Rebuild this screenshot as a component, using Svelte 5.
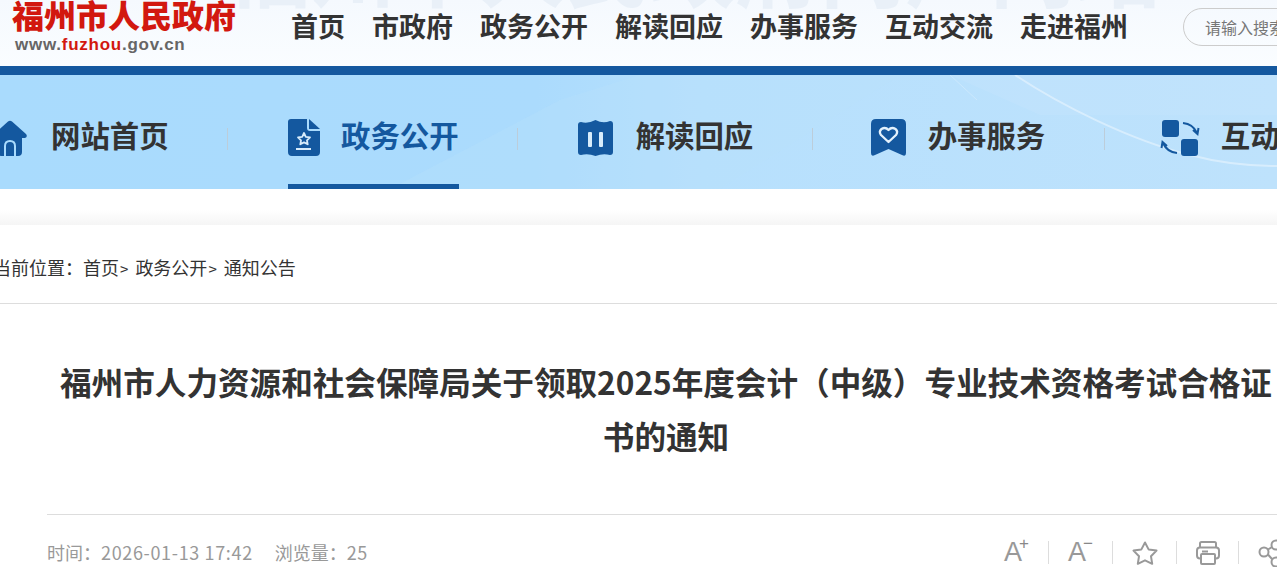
<script>
  const topLinks = ['首页', '市政府', '政务公开', '解读回应', '办事服务', '互动交流', '走进福州'];
  const channels = [
    { name: '网站首页', icon: 'home' },
    { name: '政务公开', icon: 'doc', active: true },
    { name: '解读回应', icon: 'map' },
    { name: '办事服务', icon: 'heart' },
    { name: '互动交流', icon: 'swap' }
  ];
  const crumbs = ['首页', '政务公开', '通知公告'];
</script>

<div class="page">
  <header class="top">
    <div class="watermark" aria-hidden="true">福州市人民政府门户网站</div>
    <div class="logo">
      <div class="logo-name">福州市人民政府</div>
      <div class="logo-url">www.<em>fuzhou</em>.gov.cn</div>
    </div>
    <nav class="top-links">
      {#each topLinks as link}
        <span>{link}</span>
      {/each}
    </nav>
    <div class="search">请输入搜索</div>
  </header>

  <nav class="channels">
    <svg class="channels-bg" viewBox="0 0 1277 114" preserveAspectRatio="none" aria-hidden="true">
      <defs>
        <linearGradient id="sky" x1="0" x2="1" y1="0" y2="0">
          <stop offset="0" stop-color="#a9dbfd" />
          <stop offset="0.42" stop-color="#abdbfd" />
          <stop offset="0.55" stop-color="#b7e0fd" />
          <stop offset="1" stop-color="#bee2fc" />
        </linearGradient>
      </defs>
      <rect width="1277" height="114" fill="url(#sky)" />
      <polygon points="390,114 560,25 640,0 900,0 720,114" fill="#bbe1fd" opacity="0.3" />
      <polygon points="950,0 1277,0 1277,40 1040,40" fill="#fff" opacity="0.06" />
      <path d="M950 0 L977 25" stroke="#fff" stroke-width="1" opacity="0.25" />
      <path d="M1015 0 C1060 30 1130 65 1190 80 C1220 88 1250 91 1277 91" fill="none" stroke="#fff" stroke-width="2" opacity="0.4" />
    </svg>
    {#each channels as item}
      <a class="channel" class:active={item.active}>
        <span class="channel-inner {item.icon}">
          {#if item.icon === 'home'}
            <svg width="34" height="36" viewBox="0 0 34 36">
              <path fill="#14589f" d="M15 1.5 Q17 0 19 1.5 L33 14 Q35 17 32 18 H29 V32 Q29 36 25 36 H9 Q5 36 5 32 V18 H2 Q-1 17 1 14 Z" />
              <path fill="none" stroke="#a9dbfd" stroke-width="2" d="M12 36 V26 Q12 21 17 21 Q22 21 22 26 V36" />
            </svg>
          {:else if item.icon === 'doc'}
            <svg width="32" height="37" viewBox="0 0 32 37">
              <path fill="#14589f" d="M3 0 H19 V9 Q19 12 22 12 H32 V33 Q32 37 28 37 H4 Q0 37 0 33 V3 Q0 0 3 0 Z" />
              <path fill="#14589f" d="M21 0 L32 10 H21 Z" />
              <path fill="none" stroke="#d8ecfb" stroke-width="1.8" stroke-linejoin="round" d="M16 14 L17.8 17.8 L22 18.4 L19 21.3 L19.7 25.3 L16 23.4 L12.3 25.3 L13 21.3 L10 18.4 L14.2 17.8 Z" />
              <rect x="8" y="29" width="15" height="2" fill="#d8ecfb" />
            </svg>
          {:else if item.icon === 'map'}
            <svg width="35" height="36" viewBox="0 0 35 36">
              <path fill="#14589f" d="M0 5 Q0 2 3 2 Q10 4 17.5 0 Q25 4 32 1 Q35 1 35 4 V32 Q35 35 32 35 Q25 33 17.5 36 Q10 33 3 35 Q0 35 0 32 Z" />
              <rect x="10" y="12" width="4" height="15" rx="1" fill="#d8ecfb" />
              <rect x="21" y="12" width="4" height="15" rx="1" fill="#d8ecfb" />
            </svg>
          {:else if item.icon === 'heart'}
            <svg width="35" height="37" viewBox="0 0 35 37">
              <path fill="#14589f" d="M5 0 H30 Q35 0 35 5 V34 Q35 38 31 36 L17.5 30 L4 36 Q0 38 0 34 V5 Q0 0 5 0 Z" />
              <path fill="none" stroke="#e3f1fc" stroke-width="2.3" stroke-linejoin="round" d="M17.5 23 L10 16 Q7.5 12.5 10.5 10 Q14.5 7.5 17.5 11 Q20.5 7.5 24.5 10 Q27.5 12.5 25 16 Z" />
            </svg>
          {:else}
            <svg width="37" height="36" viewBox="0 0 37 36">
              <rect x="0" y="0" width="17" height="17" rx="3" fill="#14589f" />
              <rect x="19" y="19" width="17" height="17" rx="3" fill="#14589f" />
              <path fill="none" stroke="#14589f" stroke-width="2" d="M21 3 Q31 4 35 13 M31 10 L35.5 14 L36.5 8" />
              <path fill="none" stroke="#14589f" stroke-width="2" d="M15 33 Q5 32 1 23 M5 26 L0.5 22 L-0.5 28" />
            </svg>
          {/if}
          <span class="channel-name">{item.name}</span>
        </span>
      </a>
    {/each}
  </nav>

  <div class="shade"></div>

  <main class="card">
    <div class="crumbs">
      <span class="here">当前位置：</span>
      {#each crumbs as crumb, i}
        <span>{crumb}</span>{#if i < crumbs.length - 1}<i>&gt;</i>{/if}
      {/each}
    </div>
    <article>
      <h1>福州市人力资源和社会保障局关于领取2025年度会计（中级）专业技术资格考试合格证书的通知</h1>
      <div class="meta">
        <span>时间：<span class="date">2026-01-13 17:42</span></span>
        <span class="views">浏览量：<span class="count">25</span></span>
        <div class="tools">
          <span class="tool font-btn">A<b>+</b></span>
          <span class="tool font-btn">A<b>−</b></span>
          <span class="tool">
            <svg width="26" height="24" viewBox="0 0 26 24"><path fill="none" stroke="#999" stroke-width="2" stroke-linejoin="round" d="M13 1.5 L16.6 8.4 L24.5 9.6 L19 15.3 L20.2 22.8 L13 19.3 L5.8 22.8 L7 15.3 L1.5 9.6 L9.4 8.4 Z" /></svg>
          </span>
          <span class="tool print">
            <svg width="24" height="24" viewBox="0 0 24 24"><g fill="none" stroke="#999" stroke-width="2"><path d="M4 7 V2.5 Q4 1 5.5 1 H18.5 Q20 1 20 2.5 V7" /><rect x="1" y="6.5" width="22" height="11" rx="3" /><rect x="5" y="13" width="14" height="10" rx="1" fill="#fff" /></g><path stroke="#999" stroke-width="2" d="M6 10.5 H12" /></svg>
          </span>
          <span class="tool">
            <svg width="26" height="28" viewBox="0 0 26 28"><g fill="none" stroke="#999" stroke-width="2"><circle cx="6" cy="13" r="4.5" /><circle cx="18" cy="6" r="4.5" /><circle cx="18" cy="23" r="4.5" /><path d="M10 10.5 L14 8 M10 15.5 L14 20" /></g></svg>
          </span>
        </div>
      </div>
    </article>
  </main>
</div>

<style>
  :global(body) {
    margin: 0;
    background: #fff;
    overflow: hidden;
  }

  .page {
    width: 1277px;
    height: 567px;
    overflow: hidden;
    font-family: "Noto Sans CJK SC", "Liberation Sans", sans-serif;
    color: #333;
  }

  .top {
    position: relative;
    display: flex;
    align-items: flex-start;
    height: 66px;
    overflow: hidden;
    background: linear-gradient(#f5f9fe, #fafdff);
    border-bottom: 9px solid #14589f;
  }

  .watermark {
    position: absolute;
    left: 225px;
    top: -84px;
    font-size: 85px;
    font-weight: 700;
    line-height: 96px;
    white-space: nowrap;
    color: #e9f0f8;
  }

  .logo {
    position: relative;
    width: 291px;
    flex: none;
    padding-left: 12px;
    box-sizing: border-box;
  }

  .logo-name {
    margin-top: -5px;
    font-size: 32px;
    line-height: 38px;
    font-weight: 900;
    color: #d2180f;
    white-space: nowrap;
  }

  .logo-url {
    margin: 2px 0 0 3px;
    font-family: "Liberation Sans", sans-serif;
    font-size: 17px;
    line-height: 20px;
    font-weight: 700;
    letter-spacing: 0.75px;
    color: #666;
  }

  .logo-url em {
    font-style: normal;
    color: #d2180f;
  }

  .top-links {
    position: relative;
    display: flex;
    gap: 27px;
    padding-top: 7px;
    font-size: 27px;
    line-height: 38px;
    font-weight: 700;
    color: #333;
    white-space: nowrap;
  }

  .search {
    position: relative;
    flex: none;
    box-sizing: border-box;
    width: 200px;
    height: 38px;
    margin: 8px 0 0 55px;
    padding-left: 21px;
    border: 1px solid #ccc;
    border-radius: 19px;
    font-size: 16px;
    line-height: 36px;
    color: #777;
    white-space: nowrap;
  }

  .channels {
    position: relative;
    display: flex;
    height: 114px;
    margin-left: -66.5px;
    white-space: nowrap;
  }

  .channels-bg {
    position: absolute;
    left: 66.5px;
    top: 0;
    width: 1277px;
    height: 114px;
  }

  .channel {
    position: relative;
    flex: none;
    padding: 0 59.5px;
    color: #333;
  }

  .channel:not(:last-child)::after {
    content: "";
    position: absolute;
    right: 0;
    top: 53px;
    height: 22px;
    border-right: 1px solid #bccdda;
  }

  .channel-inner {
    position: relative;
    display: flex;
    align-items: center;
    box-sizing: border-box;
    height: 114px;
    padding: 44px 0 33px;
  }

  .channel svg {
    flex: none;
    overflow: visible;
  }

  .home svg { margin-right: 24px; }
  .doc svg { margin-right: 21.5px; }
  .map svg { margin: 0 23px 0 0; }
  .heart svg { margin: 0 22px 0 -1.5px; }
  .swap svg { margin: 0 22px 0 -2.5px; }

  .channel.active .channel-inner {
    color: #14589f;
    box-shadow: inset 0 -5px 0 #14589f;
  }

  .channel-name {
    margin-top: -6px;
    font-size: 29.4px;
    line-height: 37px;
    font-weight: 700;
  }

  .shade {
    height: 36px;
    background: linear-gradient(#fff 21px, #f5f5f5);
  }

  .card {
    margin-left: -7px;
    width: 1300px;
  }

  .crumbs {
    height: 78px;
    line-height: 84px;
    font-size: 18px;
    color: #333;
    border-bottom: 1px solid #ddd;
    white-space: nowrap;
  }

  .here {
    margin-right: -4px;
  }

  .crumbs i {
    font-style: normal;
    margin: 0 7px 0 1px;
    font-size: 15px;
  }

  article {
    padding: 0 8px 0 54px;
  }

  h1 {
    margin: 50px 0 52px;
    font-size: 31.6px;
    line-height: 54px;
    font-weight: 700;
    text-align: center;
    color: #333;
  }

  .meta {
    display: flex;
    align-items: flex-start;
    height: 78px;
    border-top: 1px solid #ddd;
    padding-top: 23px;
    font-size: 18px;
    line-height: 28px;
    color: #999;
    white-space: nowrap;
  }

  .date {
    letter-spacing: 0.65px;
  }

  .count {
    letter-spacing: 0.5px;
  }

  .views {
    margin-left: 22px;
  }

  .tools {
    display: flex;
    margin: 3px -18px 0 auto;
  }

  .tool {
    display: flex;
    align-items: center;
    justify-content: center;
    box-sizing: border-box;
    width: 64px;
    height: 23px;
    border-right: 1px solid #ddd;
    font-family: "Liberation Sans", sans-serif;
    color: #999;
  }

  .tool:last-child {
    border-right: 0;
  }

  .tool.print {
    width: 62px;
  }

  .font-btn {
    font-size: 27px;
    line-height: 23px;
  }

  .font-btn b {
    align-self: flex-start;
    margin: -5px 0 0 -3px;
    font-size: 17px;
    line-height: 15px;
    font-weight: 400;
    color: #888;
  }
</style>
